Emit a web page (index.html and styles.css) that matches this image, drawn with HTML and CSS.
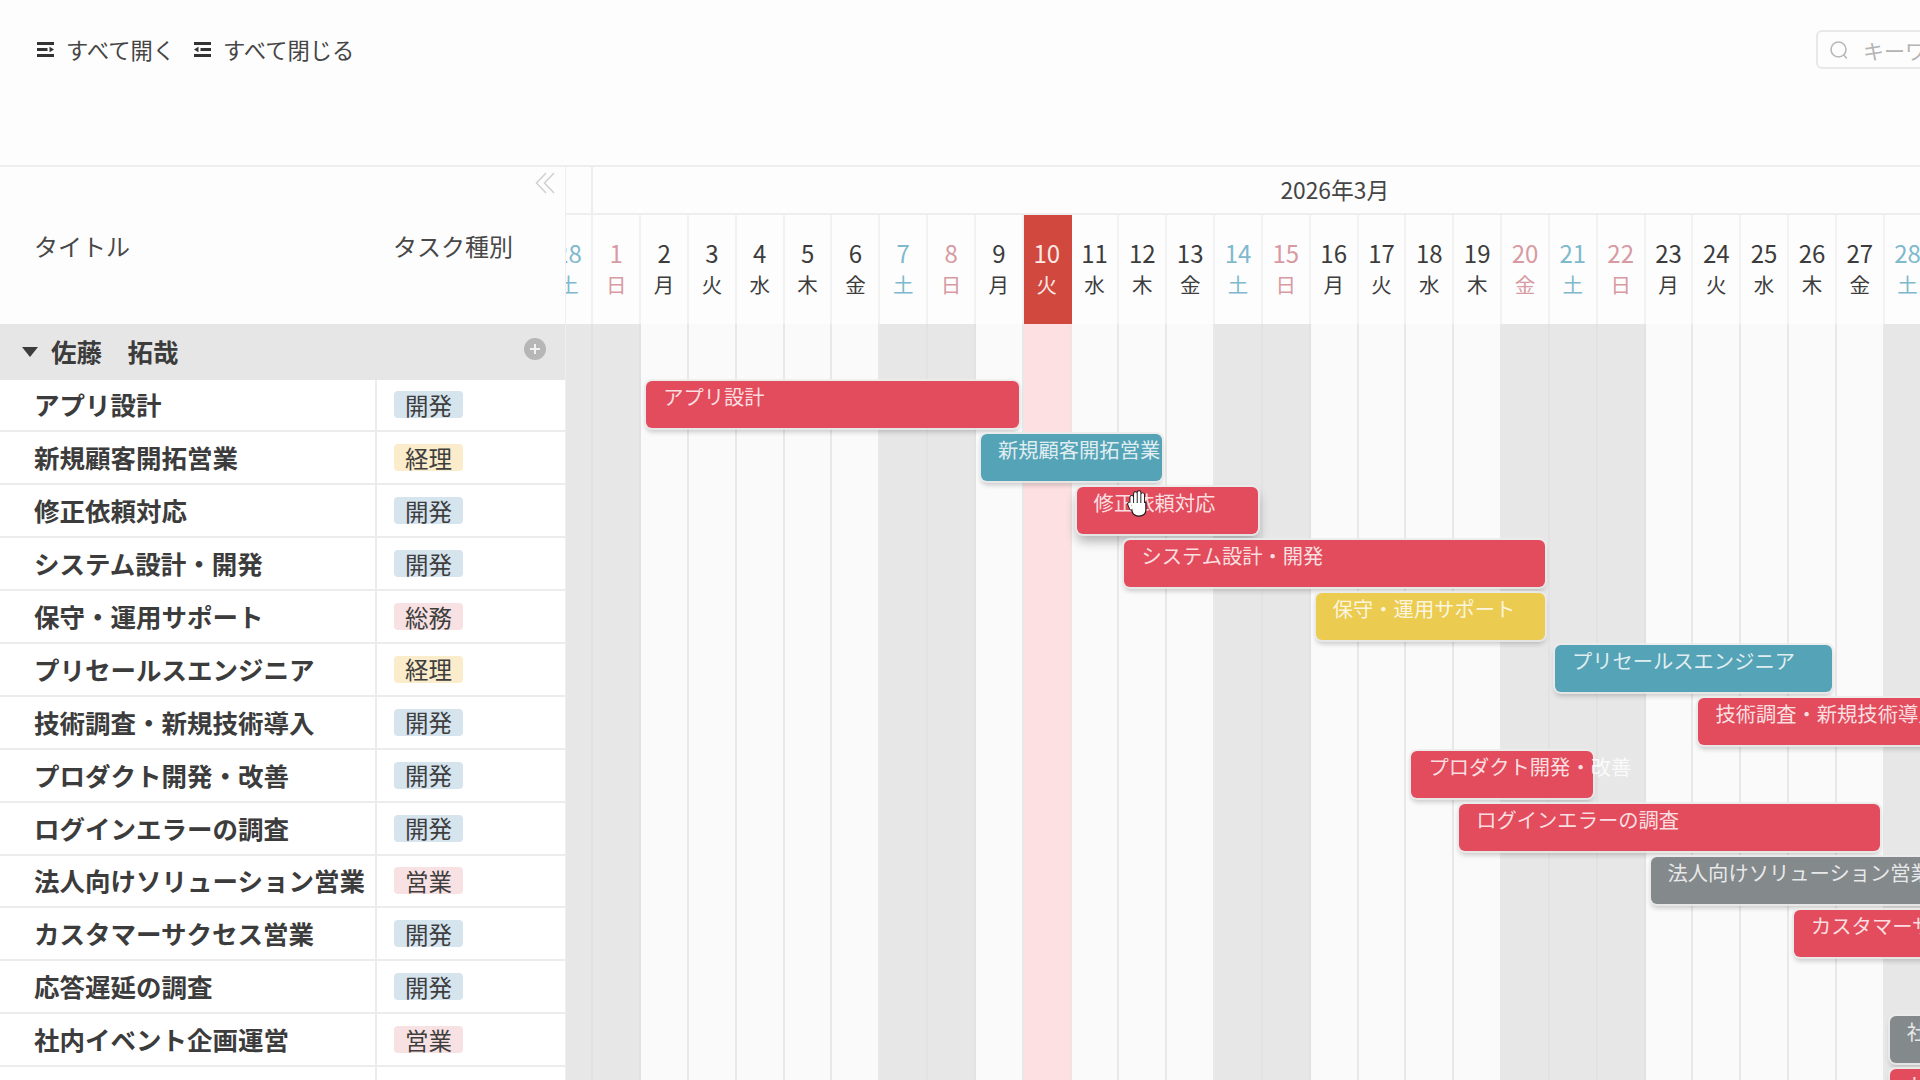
FILE: index.html
```html
<!DOCTYPE html>
<html lang="ja">
<head>
<meta charset="utf-8">
<title>ガントチャート</title>
<link rel="stylesheet" href="styles.css">
</head>
<body>
<div class="page">
  <header class="toolbar">
    <div class="tools">
      <button class="tool">
        <svg class="tool-icon" viewBox="0 0 17 15"><path d="M0 1.500h17M0 13.500h17M0 7.500h10.500" /><path class="tip" d="M12.500 4.800l4.500 2.700-4.500 2.700z"/></svg>
        <span>すべて開く</span>
      </button>
      <button class="tool">
        <svg class="tool-icon" viewBox="0 0 17 15"><path d="M0 1.500h17M0 13.500h17M6.500 7.500h10.500" /><path class="tip" d="M4.500 4.800L0 7.500l4.500 2.700z"/></svg>
        <span>すべて閉じる</span>
      </button>
    </div>
    <div class="search">
      <svg class="search-icon" viewBox="0 0 20 20"><circle cx="9.500" cy="9.500" r="7.500"/><path d="M14.800 15l3 3.500"/></svg>
      <span>キーワードで検索</span>
    </div>
  </header>

  <main class="main">
    <section class="left">
      <div class="left-head">
        <div class="collapse-row">
          <svg class="collapse" viewBox="0 0 20 22"><path d="M11 1L1.500 11 11 21M19 1L9.500 11 19 21"/></svg>
        </div>
        <div class="cols">
          <div class="col-title">タイトル</div>
          <div class="col-type">タスク種別</div>
        </div>
      </div>
      <div class="group">
        <span class="tri"></span>
        <span class="group-name">佐藤　拓哉</span>
        <span class="add"><svg viewBox="0 0 22 22"><path d="M11 6v10M6 11h10"/></svg></span>
      </div>
      <div class="row"><div class="name">アプリ設計</div><div class="type"><span class="pill dev">開発</span></div></div>
      <div class="row"><div class="name">新規顧客開拓営業</div><div class="type"><span class="pill acc">経理</span></div></div>
      <div class="row"><div class="name">修正依頼対応</div><div class="type"><span class="pill dev">開発</span></div></div>
      <div class="row"><div class="name">システム設計・開発</div><div class="type"><span class="pill dev">開発</span></div></div>
      <div class="row"><div class="name">保守・運用サポート</div><div class="type"><span class="pill adm">総務</span></div></div>
      <div class="row"><div class="name">プリセールスエンジニア</div><div class="type"><span class="pill acc">経理</span></div></div>
      <div class="row"><div class="name">技術調査・新規技術導入</div><div class="type"><span class="pill dev">開発</span></div></div>
      <div class="row"><div class="name">プロダクト開発・改善</div><div class="type"><span class="pill dev">開発</span></div></div>
      <div class="row"><div class="name">ログインエラーの調査</div><div class="type"><span class="pill dev">開発</span></div></div>
      <div class="row"><div class="name">法人向けソリューション営業</div><div class="type"><span class="pill adm">営業</span></div></div>
      <div class="row"><div class="name">カスタマーサクセス営業</div><div class="type"><span class="pill dev">開発</span></div></div>
      <div class="row"><div class="name">応答遅延の調査</div><div class="type"><span class="pill dev">開発</span></div></div>
      <div class="row"><div class="name">社内イベント企画運営</div><div class="type"><span class="pill adm">営業</span></div></div>
      <div class="row"><div class="name"></div><div class="type"></div></div>
    </section>

    <section class="right">
      <div class="timeline">
        <div class="months">
          <div class="month-prev"></div>
          <div class="month">2026年3月</div>
        </div>
        <div class="days">
          <div class="day sat"><b>28</b><i>土</i></div>
          <div class="day hol"><b>1</b><i>日</i></div>
          <div class="day"><b>2</b><i>月</i></div>
          <div class="day"><b>3</b><i>火</i></div>
          <div class="day"><b>4</b><i>水</i></div>
          <div class="day"><b>5</b><i>木</i></div>
          <div class="day"><b>6</b><i>金</i></div>
          <div class="day sat"><b>7</b><i>土</i></div>
          <div class="day hol"><b>8</b><i>日</i></div>
          <div class="day"><b>9</b><i>月</i></div>
          <div class="day now"><b>10</b><i>火</i></div>
          <div class="day"><b>11</b><i>水</i></div>
          <div class="day"><b>12</b><i>木</i></div>
          <div class="day"><b>13</b><i>金</i></div>
          <div class="day sat"><b>14</b><i>土</i></div>
          <div class="day hol"><b>15</b><i>日</i></div>
          <div class="day"><b>16</b><i>月</i></div>
          <div class="day"><b>17</b><i>火</i></div>
          <div class="day"><b>18</b><i>水</i></div>
          <div class="day"><b>19</b><i>木</i></div>
          <div class="day hol"><b>20</b><i>金</i></div>
          <div class="day sat"><b>21</b><i>土</i></div>
          <div class="day hol"><b>22</b><i>日</i></div>
          <div class="day"><b>23</b><i>月</i></div>
          <div class="day"><b>24</b><i>火</i></div>
          <div class="day"><b>25</b><i>水</i></div>
          <div class="day"><b>26</b><i>木</i></div>
          <div class="day"><b>27</b><i>金</i></div>
          <div class="day sat"><b>28</b><i>土</i></div>
        </div>
        <div class="chart">
          <div class="columns">
            <div class="column off"></div><div class="column off"></div>
            <div class="column"></div><div class="column"></div><div class="column"></div><div class="column"></div><div class="column"></div>
            <div class="column off"></div><div class="column off"></div>
            <div class="column"></div><div class="column today"></div><div class="column"></div><div class="column"></div><div class="column"></div>
            <div class="column off"></div><div class="column off"></div>
            <div class="column"></div><div class="column"></div><div class="column"></div><div class="column"></div>
            <div class="column off"></div><div class="column off"></div><div class="column off"></div>
            <div class="column"></div><div class="column"></div><div class="column"></div><div class="column"></div><div class="column"></div>
            <div class="column off"></div>
          </div>
          <div class="bars">
            <div class="bar red" style="grid-area: 1 / 3 / auto / span 8">アプリ設計</div>
            <div class="bar teal" style="grid-area: 2 / 10 / auto / span 4">新規顧客開拓営業</div>
            <div class="bar red lifted" style="grid-area: 3 / 12 / auto / span 4">修正依頼対応</div>
            <div class="bar red" style="grid-area: 4 / 13 / auto / span 9">システム設計・開発</div>
            <div class="bar yellow" style="grid-area: 5 / 17 / auto / span 5">保守・運用サポート</div>
            <div class="bar teal" style="grid-area: 6 / 22 / auto / span 6">プリセールスエンジニア</div>
            <div class="bar red" style="grid-area: 7 / 25 / auto / span 8">技術調査・新規技術導入</div>
            <div class="bar red" style="grid-area: 8 / 19 / auto / span 4">プロダクト開発・改善</div>
            <div class="bar red" style="grid-area: 9 / 20 / auto / span 9">ログインエラーの調査</div>
            <div class="bar gray" style="grid-area: 10 / 24 / auto / span 8">法人向けソリューション営業</div>
            <div class="bar red" style="grid-area: 11 / 27 / auto / span 6">カスタマーサクセス営業</div>
            <div class="bar gray" style="grid-area: 13 / 29 / auto / span 4">社内イベント企画運営</div>
            <div class="bar red" style="grid-area: 14 / 29 / auto / span 4">ト</div>
          </div>
        </div>
      </div>
      <svg class="cursor" viewBox="0 0 20 26">
        <g class="hand-line">
          <path d="M4 13V7M7.500 12V3.500M11 12V2.500M14.500 12.500V4.500M3.500 17.500L1.800 13.500"/>
          <path class="palm" d="M3.500 12.500h13.500v6.500c0 3.500-2.500 5.500-6 5.500-3 0-5-1-6-3.500z"/>
        </g>
        <g class="hand-fill">
          <path d="M4 13V7M7.500 12V3.500M11 12V2.500M14.500 12.500V4.500M3.500 17.500L1.800 13.500"/>
          <path class="palm" d="M3.500 12.500h13.500v6.500c0 3.500-2.500 5.500-6 5.500-3 0-5-1-6-3.500z"/>
        </g>
      </svg>
    </section>
  </main>
</div>
</body>
</html>
```

FILE: styles.css
```css
* { box-sizing: border-box; }

html, body {
  margin: 0;
  height: 100%;
  overflow: hidden;
  background: #fdfdfd;
}

body {
  font-family: "Noto Sans CJK JP", "Noto Sans", "Liberation Sans", sans-serif;
  color: #3a3a3a;
}

.page {
  width: 1920px;
  height: 1080px;
  display: flex;
  flex-direction: column;
  overflow: hidden;
}

/* toolbar */
.toolbar {
  height: 167px;
  flex: none;
  display: flex;
  justify-content: space-between;
  align-items: flex-start;
  padding: 30px 0 0 37px;
  border-bottom: 2px solid #eeeeee;
}

.tools {
  height: 39px;
  display: flex;
  align-items: center;
  gap: 19px;
}

.tool {
  display: flex;
  align-items: center;
  gap: 12px;
  padding: 0;
  border: 0;
  background: none;
  font: inherit;
  font-size: 22.300px;
  line-height: 30px;
  color: #454545;
}

.tool span {
  padding-bottom: 2px;
}

.tool-icon {
  width: 17px;
  height: 15px;
  fill: none;
  stroke: #333333;
  stroke-width: 3;
}

.tool-icon .tip {
  fill: #333333;
  stroke: none;
}

.search {
  width: 300px;
  height: 39px;
  flex: none;
  margin-right: -196px;
  display: flex;
  align-items: center;
  gap: 14px;
  padding-left: 11px;
  border: 2px solid #e8e8e8;
  border-radius: 6px;
  font-size: 21px;
  color: #b4b4b4;
  white-space: nowrap;
}

.search-icon {
  width: 20px;
  height: 20px;
  fill: none;
  stroke: #b8b8b8;
  stroke-width: 1.600;
}

/* layout */
.main {
  flex: 1;
  display: flex;
  min-height: 0;
}

.left {
  width: 565.500px;
  flex: none;
  border-right: 1px solid #eeeeee;
}

.left-head {
  height: 156.500px;
}

.collapse-row {
  height: 36px;
  display: flex;
  justify-content: flex-end;
  align-items: center;
  padding: 0 10px 4px 0;
}

.collapse {
  width: 20px;
  height: 22px;
  fill: none;
  stroke: #d0d0d0;
  stroke-width: 1.500;
}

.cols {
  height: 86px;
  display: flex;
  align-items: center;
  padding-bottom: 2px;
  font-size: 24px;
  color: #484848;
}

.col-title {
  width: 393px;
  padding-left: 34px;
}

/* group */
.group {
  height: 56px;
  display: flex;
  align-items: center;
  padding-left: 22px;
  background: #e6e6e6;
}

.tri {
  width: 0;
  height: 0;
  border-left: 8px solid transparent;
  border-right: 8px solid transparent;
  border-top: 10px solid #3c3c3c;
}

.group-name {
  margin-left: 13px;
  padding-bottom: 2px;
  font-size: 25.500px;
  font-weight: 700;
  color: #3c3c3c;
}

.add {
  width: 22px;
  height: 22px;
  margin-left: auto;
  margin-right: 19px;
  margin-top: -6px;
  border-radius: 50%;
  background: #b6b6b6;
}

.add svg {
  display: block;
  fill: none;
  stroke: #f1f1f1;
  stroke-width: 2;
}

/* rows */
.row {
  height: 52.900px;
  display: flex;
  background: #ffffff;
  border-bottom: 2px solid #ececec;
}

.name {
  width: 377px;
  flex: none;
  display: flex;
  align-items: center;
  padding: 0 0 2px 34px;
  font-size: 25.500px;
  font-weight: 700;
  color: #3c3c3c;
  white-space: nowrap;
  border-right: 2px solid #ececec;
}

.type {
  display: flex;
  align-items: center;
  padding-left: 17px;
}

.pill {
  width: 69px;
  height: 27px;
  display: flex;
  align-items: center;
  justify-content: center;
  border-radius: 4px;
  font-size: 23.500px;
  color: #3e3e3e;
}

.dev { background: #d6e4ee; }
.acc { background: #fbeccb; }
.adm { background: #f8e1e2; }

/* timeline */
.right {
  flex: 1;
  min-width: 0;
  overflow: hidden;
  position: relative;
}

.timeline {
  width: 1440px;
  margin-left: -20px;
  display: flex;
  flex-direction: column;
  height: 100%;
}

.months {
  height: 48px;
  flex: none;
  display: flex;
  border-bottom: 2px solid #eeeeee;
}

.month-prev {
  width: 47.840px;
  flex: none;
  border-right: 2px solid #eeeeee;
}

.month {
  width: 1483px;
  flex: none;
  padding-top: 8px;
  text-align: center;
  font-size: 22.800px;
  line-height: 30px;
  color: #454545;
}

.days {
  height: 108.500px;
  flex: none;
  display: flex;
}

.day {
  width: 47.840px;
  flex: none;
  display: flex;
  flex-direction: column;
  align-items: center;
  padding-top: 22px;
  border-right: 2px solid #f2f2f2;
  color: #3c3c3c;
}

.day b {
  font-weight: 400;
  font-size: 24px;
  line-height: 32px;
}

.day i {
  font-style: normal;
  font-size: 20.500px;
  line-height: 30px;
}

.sat { color: #7fb9cd; }
.hol { color: #d89aa2; }
.now { background: #d1483e; color: #fbe9e6; border-right-color: #d1483e; }

.chart {
  flex: 1;
  min-height: 0;
  display: grid;
  grid-template-columns: 1fr;
  grid-template-rows: 1fr;
}

.columns, .bars {
  grid-area: 1 / 1;
  min-height: 0;
}

.columns {
  display: flex;
}

.column {
  width: 47.840px;
  flex: none;
  background: #fafafa;
  border-right: 2px solid #e8e8e8;
}

.off {
  background: #e7e7e7;
  border-right-color: #e2e2e2;
}

.today {
  background: #fde0e1;
  border-right-color: #f2e2e2;
}

.bars {
  display: grid;
  grid-template-columns: repeat(36, 47.840px);
  grid-auto-rows: 52.900px;
  padding-top: 56px;
}

.bar {
  height: 47px;
  margin: 1.500px 5px 0;
  padding: 1px 0 0 17px;
  border-radius: 6px;
  font-size: 20.300px;
  line-height: 28px;
  white-space: nowrap;
  color: rgba(255, 255, 255, 0.84);
  box-shadow: 0 0 0 2px rgba(235, 235, 235, 0.85), 0 4px 5px rgba(0, 0, 0, 0.2);
}

.lifted {
  box-shadow: 0 0 0 2px rgba(235, 235, 235, 0.85), 0 7px 12px rgba(0, 0, 0, 0.3);
}

.red { background: #e34c5c; }
.teal { background: #55a3b6; }
.yellow { background: #ebcb50; }
.gray { background: #84898c; }

/* hand cursor over the dragged bar */
.cursor {
  position: absolute;
  left: 561.500px;
  top: 323px;
  width: 22px;
  height: 27px;
  overflow: visible;
}

.hand-line, .hand-fill {
  fill: none;
  stroke-linecap: round;
  stroke-linejoin: round;
}

.hand-line { stroke: #1c1c1c; stroke-width: 4.400; }
.hand-line .palm { fill: #1c1c1c; stroke-width: 2.400; }
.hand-fill { stroke: #ffffff; stroke-width: 2.600; }
.hand-fill .palm { fill: #ffffff; stroke: none; }
```
